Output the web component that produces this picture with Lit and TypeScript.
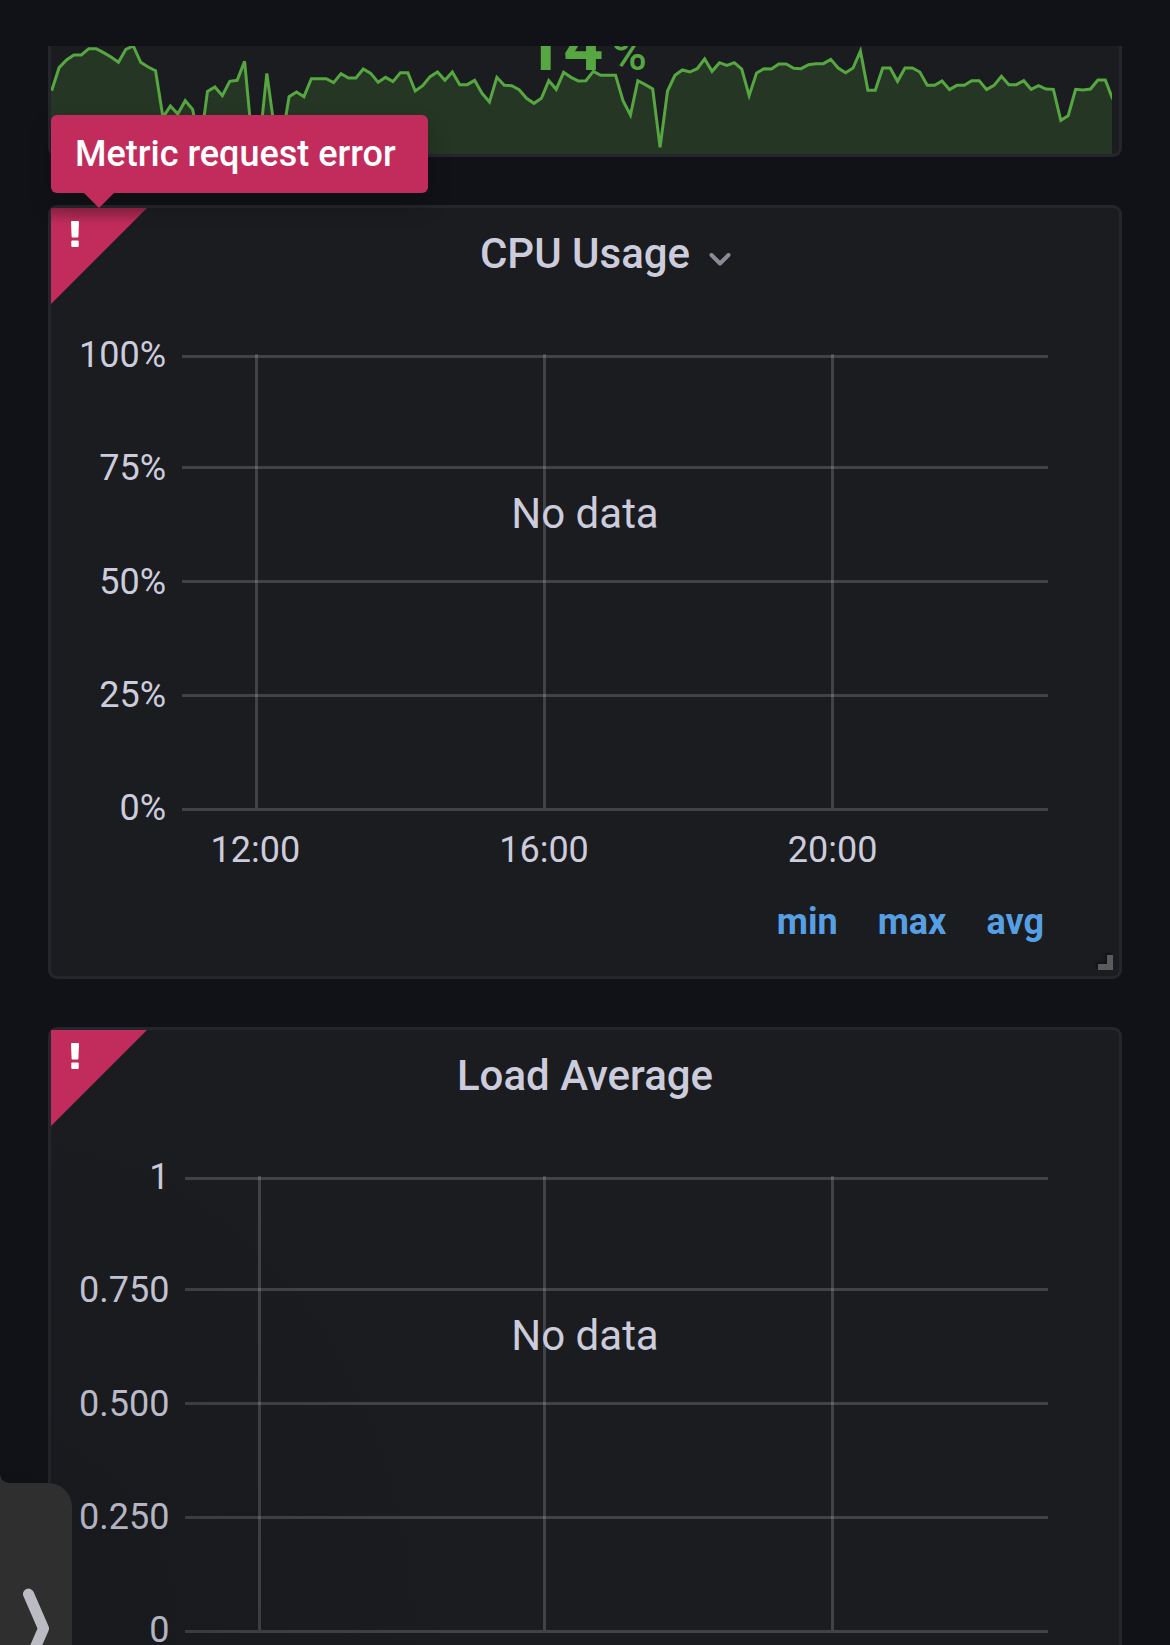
import { LitElement, html, svg, css, nothing } from "lit";
import { customElement, property } from "lit/decorators.js";

/** Height of each sparkline sample, measured down from the top of its viewBox. */
const SAMPLES = [
  134, 65, 42, 27, 27, 8, 8, 20, 33, 49, 10, 0, 49, 63, 74, 214, 180, 204, 164, 190,
  302, 136, 123, 149, 106, 103, 46, 282, 292, 82, 244, 286, 152, 138, 152, 98, 98, 98,
  110, 83, 96, 96, 69, 82, 109, 94, 107, 80, 80, 135, 119, 92, 78, 103, 78, 116, 116,
  103, 142, 168, 94, 118, 119, 131, 157, 172, 157, 104, 130, 79, 94, 105, 104, 76, 88,
  88, 88, 164, 207, 104, 116, 129, 304, 135, 88, 72, 78, 68, 39, 76, 50, 58, 50, 69,
  149, 81, 68, 69, 54, 54, 67, 68, 56, 53, 53, 40, 66, 80, 66, 15, 133, 133, 66, 66,
  106, 66, 66, 78, 118, 118, 105, 131, 118, 118, 104, 104, 131, 118, 91, 116, 116,
  104, 130, 119, 129, 130, 223, 209, 130, 132, 129, 102, 102, 160,
];

@customElement("spark-line")
class SparkLine extends LitElement {
  static styles = css`
    :host {
      display: block;
      height: 108px;
    }
    .spark {
      display: block;
      width: 100%;
      height: 100%;
    }
    .area {
      fill: #253624;
    }
    .line {
      fill: none;
      stroke: #56a641;
      stroke-width: 3;
      vector-effect: non-scaling-stroke;
    }
  `;

  render() {
    const step = 22.26;
    const points = SAMPLES.map((y, i) => `${(2 + i * step).toFixed(1)},${y}`).join(" ");
    const end = 2 + (SAMPLES.length - 1) * step;
    return html`
      <svg class="spark" viewBox="0 0 3183 324" preserveAspectRatio="none" aria-hidden="true">
        <polygon class="area" points="0,324 0,134 ${points} ${end},324"></polygon>
        <polyline class="line" points=${points}></polyline>
      </svg>
    `;
  }
}

@customElement("graph-panel")
class GraphPanel extends LitElement {
  @property() heading = "";
  @property() error = "";
  @property({ type: Boolean }) active = false;
  @property({ type: Array }) yTicks: string[] = [];
  @property({ type: Array }) xTicks: string[] = [];
  @property({ type: Array }) xLines: number[] = [];
  @property({ type: Array }) legend: string[] = [];
  @property({ type: Number }) plotWidth = 866;

  static styles = css`
    :host {
      display: block;
      position: relative;
      flex: none;
      box-sizing: border-box;
      border: 3px solid #25262b;
      border-radius: 9px;
      background: #1b1c20;
      color: #ccccdc;
    }
    .corner {
      position: absolute;
      top: 0;
      left: 0;
      width: 96px;
      height: 96px;
      padding: 0;
      border: 0;
      background: #c22c5c;
      clip-path: polygon(0 0, 100% 0, 0 100%);
    }
    .corner.shaded {
      background: linear-gradient(#8f2347, #c22c5c 16px);
    }
    .mark {
      position: absolute;
      top: 13px;
      left: 20px;
      width: 8px;
      height: 26px;
      fill: #fff;
    }
    .tooltip {
      position: absolute;
      z-index: 1;
      left: 0;
      bottom: 100%;
      margin-bottom: 15px;
      padding: 18px 32px 18px 24px;
      border-radius: 6px;
      background: #c22c5c;
      color: #fff;
      font-size: 36px;
      font-weight: 500;
      line-height: 42px;
      white-space: nowrap;
      box-shadow: 0 12px 24px rgba(0, 0, 0, 0.2);
    }
    .tooltip::after {
      content: "";
      position: absolute;
      top: 100%;
      left: 33px;
      border: 15px solid transparent;
      border-top-color: #c22c5c;
      border-bottom: 0;
    }
    .head {
      display: grid;
      grid-template-columns: 1fr auto 1fr;
      align-items: center;
      height: 92px;
    }
    .title {
      grid-column: 2;
      margin: 0;
      font-size: 42px;
      font-weight: 500;
      line-height: 48px;
    }
    .menu {
      display: flex;
      justify-self: start;
      margin: 10px 0 0 19px;
      padding: 0;
      border: 0;
      background: none;
    }
    .chevron {
      width: 22px;
      height: 13px;
      fill: none;
      stroke: #8b8b96;
      stroke-width: 4;
      stroke-linecap: round;
      stroke-linejoin: round;
    }
    .body {
      display: grid;
      grid-template-columns: auto 1fr;
      column-gap: 16px;
      padding: 34px 71px 33px 28px;
    }
    .y-axis {
      display: flex;
      flex-direction: column;
      justify-content: space-between;
      height: 495px;
      font-size: 36px;
      line-height: 42px;
      text-align: right;
    }
    .plot {
      display: block;
      width: 100%;
      height: 457px;
      margin-top: 20px;
      fill: rgba(255, 255, 255, 0.17);
      shape-rendering: crispEdges;
    }
    .x-axis {
      grid-column: 2;
      display: grid;
      grid-template-columns: repeat(3, 1fr);
      margin: 0 71px 0 -71px;
      font-size: 36px;
      line-height: 42px;
      text-align: center;
    }
    .legend {
      grid-column: 1 / -1;
      display: flex;
      justify-content: flex-end;
      gap: 40px;
      margin-top: 30px;
      padding-right: 4px;
    }
    .series {
      padding: 0;
      border: 0;
      background: none;
      color: #579fe3;
      font: 700 36px/42px Roboto, sans-serif;
    }
    .empty {
      position: absolute;
      top: 282px;
      left: 0;
      right: 0;
      margin: 0;
      font-size: 42px;
      line-height: 48px;
      text-align: center;
    }
    .grip {
      position: absolute;
      right: 6px;
      bottom: 6px;
      width: 15px;
      height: 15px;
      fill: #5b5b5c;
      filter: drop-shadow(-2px -2px 1px #111214);
    }
  `;

  render() {
    const yLines = [1, 112, 226, 340, 454];
    return html`
      <button class="corner ${this.error ? "shaded" : ""}" aria-label="Panel error">
        <svg class="mark" viewBox="0 0 8 26">
          <path d="M0.8 0H7.2Q8 0 8 1L7.4 15.500Q7.400 16.500 6.400 16.500H1.600Q0.600 16.500 0.600 15.500L0 1Q0 0 0.800 0Z"></path>
          <rect x="0.300" y="19.500" width="7.400" height="6.500" rx="1"></rect>
        </svg>
      </button>
      ${this.error ? html`<div class="tooltip" role="tooltip">${this.error}</div>` : nothing}
      <header class="head">
        <h2 class="title">${this.heading}</h2>
        ${this.active
          ? html`<button class="menu" aria-label="Panel menu">
              <svg class="chevron" viewBox="0 0 22 13"><path d="M2.500 2 11 10.500 19.500 2"></path></svg>
            </button>`
          : nothing}
      </header>
      <div class="body">
        <div class="y-axis">${this.yTicks.map((t) => html`<span>${t}</span>`)}</div>
        <svg class="plot" viewBox="0 0 ${this.plotWidth} 457" preserveAspectRatio="none" aria-hidden="true">
          ${yLines.map((y) => svg`<rect x="0" y=${y} width=${this.plotWidth} height="3"></rect>`)}
          ${this.xLines.map((x) => svg`<rect x=${x} y="0" width="3" height="454"></rect>`)}
        </svg>
        ${this.xTicks.length
          ? html`<div class="x-axis">${this.xTicks.map((t) => html`<span>${t}</span>`)}</div>`
          : nothing}
        ${this.legend.length
          ? html`<div class="legend">
              ${this.legend.map((t) => html`<button class="series">${t}</button>`)}
            </div>`
          : nothing}
      </div>
      <p class="empty">No data</p>
      ${this.active
        ? html`<svg class="grip" viewBox="0 0 15 15" aria-hidden="true"><path d="M9 0h6v15H0V9h9z"></path></svg>`
        : nothing}
    `;
  }
}

@customElement("app-root")
class AppRoot extends LitElement {
  static styles = css`
    :host {
      display: block;
      position: relative;
      box-sizing: border-box;
      height: 100vh;
      padding-top: 46px;
      overflow: hidden;
      background: #111217;
      font-family: Roboto, sans-serif;
    }
    .dashboard {
      display: flex;
      flex-direction: column;
      gap: 48px;
      box-sizing: border-box;
      height: 100%;
      padding: 0 48px;
      overflow: hidden;
    }
    .stat {
      position: relative;
      flex: none;
      padding-right: 7px;
      border: 3px solid #25262b;
      border-top: 0;
      border-radius: 0 0 9px 9px;
      background: #1b1c20;
      overflow: hidden;
    }
    .value {
      position: absolute;
      top: -39px;
      left: 0;
      right: 0;
      color: #56a641;
      font-size: 70px;
      font-weight: 700;
      line-height: 78px;
      text-align: center;
    }
    .unit {
      margin-left: 8px;
      font-size: 48px;
      font-weight: 500;
    }
    .shade {
      position: absolute;
      left: 0;
      bottom: 0;
      width: 460px;
      height: 560px;
      background: radial-gradient(ellipse at 0 100%, rgba(12, 12, 16, 0.2), transparent 70%);
      pointer-events: none;
    }
    .drawer {
      position: absolute;
      left: 0;
      bottom: 0;
      display: block;
      width: 72px;
      height: 162px;
      padding: 103px 0 0 22px;
      border: 0;
      border-radius: 0 24px 0 0;
      background: #2f2f30;
    }
    .drawer::before {
      content: "";
      position: absolute;
      left: 0;
      bottom: 100%;
      width: 8px;
      height: 8px;
      background: radial-gradient(circle at 100% 0, transparent 7px, #2f2f30 8px);
    }
    .arrow {
      display: block;
      width: 28px;
      height: 82px;
      fill: none;
      stroke: #bbbbc3;
      stroke-width: 11;
      stroke-linecap: round;
      stroke-linejoin: round;
    }
  `;

  render() {
    return html`
      <main class="dashboard">
        <section class="stat">
          <spark-line></spark-line>
          <div class="value">14<span class="unit">%</span></div>
        </section>
        <graph-panel
          heading="CPU Usage"
          error="Metric request error"
          active
          .yTicks=${["100%", "75%", "50%", "25%", "0%"]}
          .xTicks=${["12:00", "16:00", "20:00"]}
          .xLines=${[73, 361, 649]}
          .legend=${["min", "max", "avg"]}
        ></graph-panel>
        <graph-panel
          heading="Load Average"
          .plotWidth=${863}
          .yTicks=${["1", "0.750", "0.500", "0.250", "0"]}
          .xLines=${[73, 358, 646]}
        ></graph-panel>
      </main>
      <div class="shade"></div>
      <button class="drawer" aria-label="Open drawer">
        <svg class="arrow" viewBox="0 0 28 82"><path d="M6.500 8 21.500 42.500 6.500 77"></path></svg>
      </button>
    `;
  }
}
